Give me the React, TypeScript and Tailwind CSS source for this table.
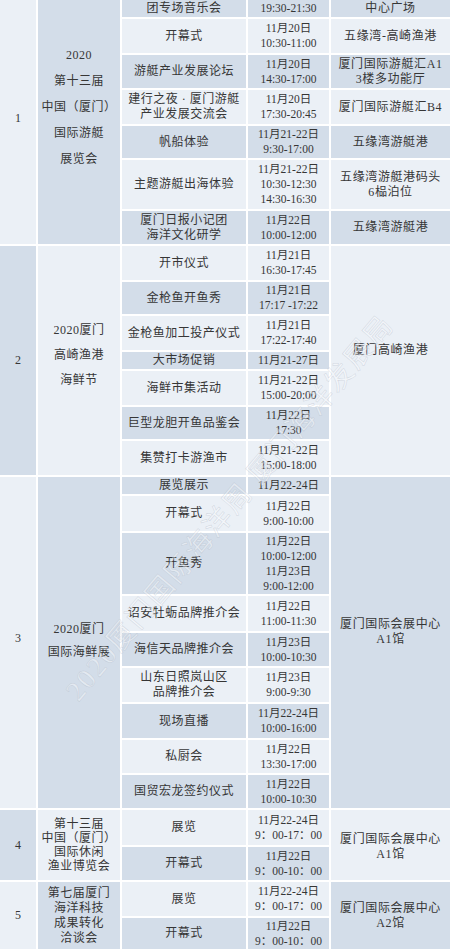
import type { ReactNode } from "react";

const DARK = "bg-[#d3dde9]";
const LIGHT = "bg-[#ebf0f6]";

type Row = {
  event: string[];
  time: string[];
  place?: string[];
  dark: boolean;
};

type Section = {
  no: string;
  noDark: boolean;
  noClass: string;
  title: string[];
  titleDark: boolean;
  titleClass: string;
  rowsClass: string;
  rows: Row[];
  place?: string[];
  placeDark?: boolean;
  placeClass?: string;
};

const sections: Section[] = [
  {
    no: "1",
    noDark: false,
    noClass: "pb-[8px]",
    title: ["2020", "第十三届", "中国（厦门）", "国际游艇", "展览会"],
    titleDark: true,
    titleClass: "leading-[26px] pb-[30px]",
    rowsClass: "grid-rows-[17px_34px_33px_34px_32px_49px_33px]",
    rows: [
      { event: ["团专场音乐会"], time: ["19:30-21:30"], place: ["中心广场"], dark: true },
      { event: ["开幕式"], time: ["11月20日", "10:30-11:00"], place: ["五缘湾-高崎渔港"], dark: false },
      { event: ["游艇产业发展论坛"], time: ["11月20日", "14:30-17:00"], place: ["厦门国际游艇汇A1", "3楼多功能厅"], dark: true },
      { event: ["建行之夜 · 厦门游艇", "产业发展交流会"], time: ["11月20日", "17:30-20:45"], place: ["厦门国际游艇汇B4"], dark: false },
      { event: ["帆船体验"], time: ["11月21-22日", "9:30-17:00"], place: ["五缘湾游艇港"], dark: true },
      { event: ["主题游艇出海体验"], time: ["11月21-22日", "10:30-12:30", "14:30-16:30"], place: ["五缘湾游艇港码头", "6榀泊位"], dark: false },
      { event: ["厦门日报小记团", "海洋文化研学"], time: ["11月22日", "10:00-12:00"], place: ["五缘湾游艇港"], dark: true },
    ],
  },
  {
    no: "2",
    noDark: true,
    noClass: "",
    title: ["2020厦门", "高崎渔港", "海鲜节"],
    titleDark: false,
    titleClass: "leading-[25px] pb-[10px]",
    rowsClass: "grid-rows-[34px_32px_34px_17px_34px_32px_34px]",
    place: ["厦门高崎渔港"],
    placeDark: false,
    placeClass: "pb-[20px]",
    rows: [
      { event: ["开市仪式"], time: ["11月21日", "16:30-17:45"], dark: false },
      { event: ["金枪鱼开鱼秀"], time: ["11月21日", "17:17 -17:22"], dark: true },
      { event: ["金枪鱼加工投产仪式"], time: ["11月21日", "17:22-17:40"], dark: false },
      { event: ["大市场促销"], time: ["11月21-27日"], dark: true },
      { event: ["海鲜市集活动"], time: ["11月21-22日", "15:00-20:00"], dark: false },
      { event: ["巨型龙胆开鱼品鉴会"], time: ["11月22日", "17:30"], dark: true },
      { event: ["集赞打卡游渔市"], time: ["11月21-22日", "15:00-18:00"], dark: false },
    ],
  },
  {
    no: "3",
    noDark: false,
    noClass: "pb-[8px]",
    title: ["2020厦门", "国际海鲜展"],
    titleDark: true,
    titleClass: "leading-[23px] pb-[4px]",
    rowsClass: "grid-rows-[17px_35px_61px_35px_33px_34px_34px_33px_33px]",
    place: ["厦门国际会展中心", "A1馆"],
    placeDark: true,
    placeClass: "pb-[22px]",
    rows: [
      { event: ["展览展示"], time: ["11月22-24日"], dark: true },
      { event: ["开幕式"], time: ["11月22日", "9:00-10:00"], dark: false },
      { event: ["开鱼秀"], time: ["11月22日", "10:00-12:00", "11月23日", "9:00-12:00"], dark: true },
      { event: ["诏安牡蛎品牌推介会"], time: ["11月22日", "11:00-11:30"], dark: false },
      { event: ["海信天品牌推介会"], time: ["11月23日", "10:00-10:30"], dark: true },
      { event: ["山东日照岚山区", "品牌推介会"], time: ["11月23日", "9:00-9:30"], dark: false },
      { event: ["现场直播"], time: ["11月22-24日", "10:00-16:00"], dark: true },
      { event: ["私厨会"], time: ["11月22日", "13:30-17:00"], dark: false },
      { event: ["国贸宏龙签约仪式"], time: ["11月22日", "10:00-10:30"], dark: true },
    ],
  },
  {
    no: "4",
    noDark: true,
    noClass: "",
    title: ["第十三届", "中国（厦门）", "国际休闲", "渔业博览会"],
    titleDark: false,
    titleClass: "leading-[14px]",
    rowsClass: "grid-rows-[35px_33px]",
    place: ["厦门国际会展中心", "A1馆"],
    placeDark: false,
    placeClass: "pt-[4px]",
    rows: [
      { event: ["展览"], time: ["11月22-24日", "9：00-17：00"], dark: false },
      { event: ["开幕式"], time: ["11月22日", "9：00-10：00"], dark: true },
    ],
  },
  {
    no: "5",
    noDark: false,
    noClass: "",
    title: ["第七届厦门", "海洋科技", "成果转化", "洽谈会"],
    titleDark: true,
    titleClass: "leading-[15px]",
    rowsClass: "grid-rows-[34px_31px]",
    place: ["厦门国际会展中心", "A2馆"],
    placeDark: true,
    placeClass: "",
    rows: [
      { event: ["展览"], time: ["11月22-24日", "9：00-17：00"], dark: false },
      { event: ["开幕式"], time: ["11月22日", "9：00-10：00"], dark: true },
    ],
  },
];

function Lines({ lines }: { lines: string[] }) {
  return (
    <>
      {lines.map((line, i) => (
        <span className="block" key={i}>
          {line}
        </span>
      ))}
    </>
  );
}

function Cell({ dark, className = "", children }: { dark: boolean; className?: string; children: ReactNode }) {
  return (
    <div className={`flex flex-col items-center justify-center text-center ${dark ? DARK : LIGHT} ${className}`}>
      {children}
    </div>
  );
}

export default function App() {
  return (
    <div
      className="relative h-[949px] w-[450px] overflow-hidden bg-white text-[12px] leading-[15px] text-[#363636]"
      style={{ fontFamily: '"Liberation Serif", "Noto Sans CJK SC", serif' }}
    >
      <div className="flex flex-col gap-[2px]">
        {sections.map((s) => (
          <div className={`grid grid-cols-[36px_82px_124px_81px_1fr] gap-[2px] ${s.rowsClass}`} key={s.no}>
            <Cell dark={s.noDark} className={`col-start-1 row-span-full ${s.noClass}`}>
              {s.no}
            </Cell>
            <Cell dark={s.titleDark} className={`col-start-2 row-span-full tracking-[0.5px] ${s.titleClass}`}>
              <Lines lines={s.title} />
            </Cell>
            {s.place && (
              <Cell dark={!!s.placeDark} className={`col-start-5 row-span-full tracking-[0.6px] ${s.placeClass ?? ""}`}>
                <Lines lines={s.place} />
              </Cell>
            )}
            {s.rows.map((r, i) => (
              <div className="contents" key={i}>
                <Cell dark={r.dark} className="col-start-3 tracking-[0.5px]">
                  <Lines lines={r.event} />
                </Cell>
                <Cell dark={r.dark} className="col-start-4 text-[11.5px] leading-[15px]">
                  <Lines lines={r.time} />
                </Cell>
                {r.place && (
                  <Cell dark={r.dark} className="col-start-5 tracking-[0.6px]">
                    <Lines lines={r.place} />
                  </Cell>
                )}
              </div>
            ))}
          </div>
        ))}
      </div>

      {/* watermark */}
      <div className="pointer-events-none absolute left-[230px] top-[508px] -translate-x-1/2 -translate-y-1/2 -rotate-[50deg] whitespace-nowrap text-[28px] leading-none tracking-[2px] text-white/40 [-webkit-text-stroke:0.5px_rgba(160,170,185,0.4)]">
        2020厦门国际海洋周 厦门海洋发展局
      </div>
    </div>
  );
}
